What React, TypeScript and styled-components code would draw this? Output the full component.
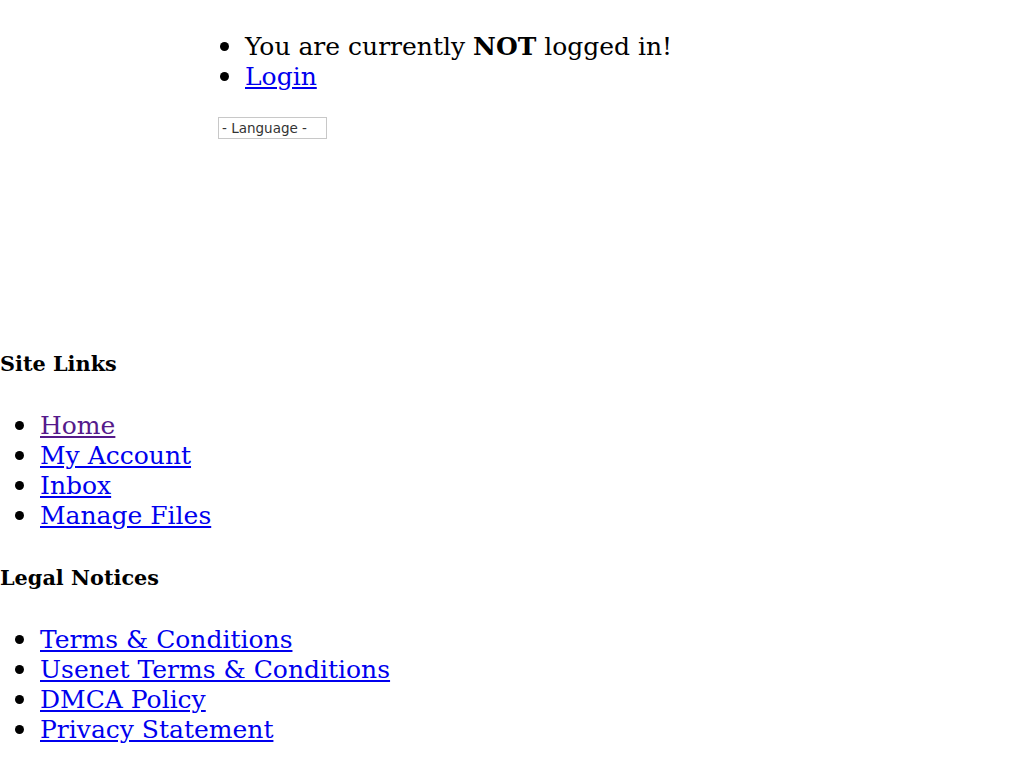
import styled, { createGlobalStyle } from "styled-components";

const GlobalStyle = createGlobalStyle`
  body {
    margin: 0;
    background: #fff;
    color: #000;
    font-family: "DejaVu Serif", serif;
  }
`;

const Header = styled.div`
  box-sizing: border-box;
  padding: 30px 0 0 218px;
  height: 352px;
`;

const UserList = styled.ul`
  margin: 0;
  padding-left: 27px;
  font-size: 25px;
  line-height: 30px;

  li {
    height: 30px;
  }

  li::marker {
    font-size: 1.2em;
  }
`;

const LangSelect = styled.select`
  margin-top: 27px;
  width: 109px;
  height: 22px;
  font-family: "DejaVu Sans", sans-serif;
  font-size: 13.5px;
  color: #333;
  background: #fff;
  border: 1px solid #c8c8c8;
  border-radius: 0;
  appearance: none;
  padding: 0 3px;
`;

const Heading = styled.h4`
  margin: 0;
  font-size: 20.8px;
  line-height: 24px;
  font-weight: bold;
`;

const LinkList = styled.ul`
  margin: 33px 0 37px;
  padding-left: 40px;
  font-size: 25px;
  line-height: 30px;

  li {
    height: 30px;
  }

  li::marker {
    font-size: 1.2em;
  }
`;

const Link = styled.a<{ $visited?: boolean }>`
  color: ${(p) => (p.$visited ? "#551a8b" : "#0000ee")};
  text-decoration: underline;
`;

export default function App() {
  return (
    <>
      <GlobalStyle />
      <Header>
        <UserList>
          <li>
            You are currently <b>NOT</b> logged in!
          </li>
          <li>
            <Link href="#">Login</Link>
          </li>
        </UserList>
        <LangSelect defaultValue="">
          <option value="">- Language -</option>
        </LangSelect>
      </Header>
      <Heading>Site Links</Heading>
      <LinkList>
        <li>
          <Link href="#" $visited>
            Home
          </Link>
        </li>
        <li>
          <Link href="#">My Account</Link>
        </li>
        <li>
          <Link href="#">Inbox</Link>
        </li>
        <li>
          <Link href="#">Manage Files</Link>
        </li>
      </LinkList>
      <Heading>Legal Notices</Heading>
      <LinkList>
        <li>
          <Link href="#">Terms &amp; Conditions</Link>
        </li>
        <li>
          <Link href="#">Usenet Terms &amp; Conditions</Link>
        </li>
        <li>
          <Link href="#">DMCA Policy</Link>
        </li>
        <li>
          <Link href="#">Privacy Statement</Link>
        </li>
      </LinkList>
    </>
  );
}
